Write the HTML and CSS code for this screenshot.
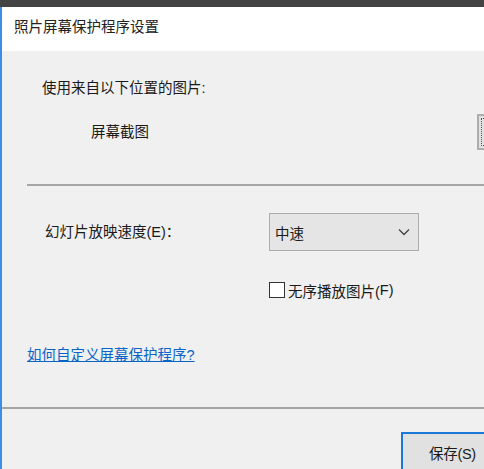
FILE: index.html
```html
<!DOCTYPE html>
<html lang="zh-CN">
<head>
<meta charset="utf-8">
<title>照片屏幕保护程序设置</title>
<link rel="stylesheet" href="styles.css">
</head>
<body>
<div class="topbar"></div>
<div class="window">
  <div class="titlebar">照片屏幕保护程序设置</div>
  <div class="content">
    <div class="source">
      <div class="label">使用来自以下位置的图片:</div>
      <div class="source-row">
        <span class="folder">屏幕截图</span>
        <span class="browse"></span>
      </div>
    </div>
    <div class="divider short"></div>
    <div class="settings">
      <div class="speed-label">幻灯片放映速度(<u>E</u>)：</div>
      <div class="select">
        <span>中速</span>
        <svg class="chev" width="12" height="8" viewBox="0 0 12 8"><path d="M1 1.5 L6 6.5 L11 1.5" fill="none" stroke="#444" stroke-width="1.3"/></svg>
      </div>
      <div></div>
      <label class="check"><span class="box"></span>无序播放图片(<u>F</u>)</label>
    </div>
    <a class="help" href="#">如何自定义屏幕保护程序?</a>
    <div class="divider full"></div>
    <div class="footer">
      <button class="save"><span class="save-text">保存(<u>S</u>)</span></button>
    </div>
  </div>
</div>
</body>
</html>
```
FILE: styles.css
```css
html, body {
  margin: 0;
  padding: 0;
}
body {
  width: 484px;
  height: 469px;
  overflow: hidden;
  background: #f0f0f0;
  font-family: "Liberation Sans", "Noto Sans CJK SC", sans-serif;
  font-size: 14.5px;
  color: #1a1a1a;
}
.topbar {
  height: 7px;
  background: #434343;
}
.window {
  border-left: 2px solid #3a8ee6;
  height: 462px;
  box-sizing: border-box;
  overflow: hidden;
}
.titlebar {
  height: 44px;
  background: #fff;
  padding-left: 12px;
  line-height: 40px;
  color: #222;
}
.content {
  display: flex;
  flex-direction: column;
}
.source {
  padding-top: 27px;
  padding-left: 40px;
}
.label {
  line-height: 20px;
}
.source-row {
  margin-top: 16px;
  display: flex;
  align-items: center;
  height: 36px;
  overflow: hidden;
}
.folder {
  margin-left: 49px;
  line-height: 20px;
}
.browse {
  margin-left: auto;
  margin-right: -80px;
  width: 87px;
  height: 36px;
  box-sizing: border-box;
  border: 2px solid #adadad;
  outline: 1px dotted #555;
  outline-offset: -5px;
  background: #e1e1e1;
  flex-shrink: 0;
}
.divider {
  height: 2px;
  background: #a5a5a5;
}
.divider.short {
  margin-top: 34px;
  margin-left: 25px;
}
.settings {
  margin-top: 27px;
  display: grid;
  grid-template-columns: 224px 150px;
  padding-left: 43px;
  row-gap: 31px;
  align-items: center;
}
.speed-label {
  line-height: 20px;
}
.select {
  height: 38px;
  box-sizing: border-box;
  border: 1px solid #adadad;
  background: #e5e5e5;
  display: flex;
  align-items: center;
  justify-content: space-between;
  padding: 0 8px 0 5px;
}
.check {
  display: flex;
  align-items: center;
  height: 16px;
  white-space: nowrap;
}
.box {
  width: 16px;
  height: 16px;
  box-sizing: border-box;
  border: 1px solid #333;
  background: #fff;
  margin-right: 3px;
  flex-shrink: 0;
}
.help {
  margin-top: 47px;
  margin-left: 25px;
  line-height: 20px;
  color: #0a64c8;
  text-decoration: underline;
  align-self: flex-start;
}
.divider.full {
  margin-top: 42px;
}
.footer {
  margin-top: 23px;
  padding-left: 399px;
  overflow: hidden;
  display: flex;
}
.save {
  width: 100px;
  flex-shrink: 0;
  height: 40px;
  box-sizing: border-box;
  border: 2px solid #1a78d6;
  background: #e1e1e1;
  font-family: inherit;
  font-size: 14.5px;
  color: #1a1a1a;
  text-align: left;
  padding: 0 0 0 26px;
  white-space: nowrap;
}
.save-text {
  letter-spacing: -0.3px;
}
u {
  text-decoration: none;
}
```
